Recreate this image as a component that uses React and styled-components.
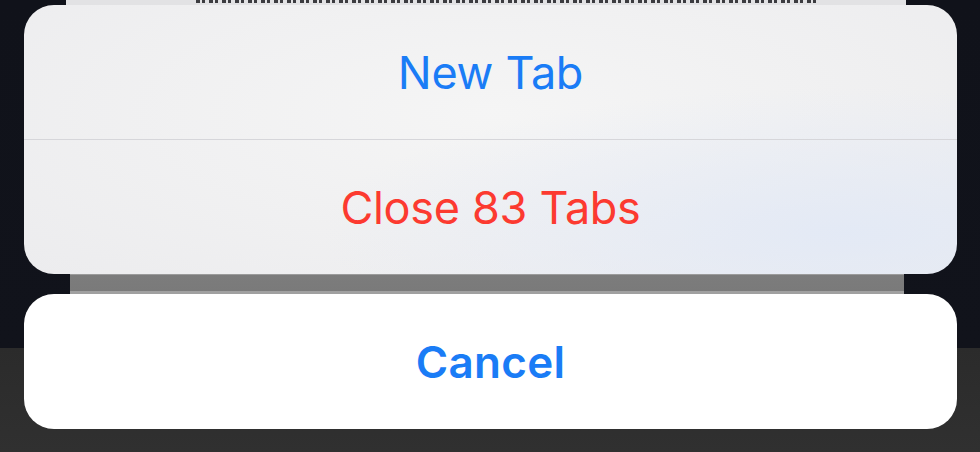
import React from 'react';
import styled, { createGlobalStyle } from 'styled-components';

const Global = createGlobalStyle`
    html, body {
        margin: 0;
        padding: 0;
        background: #10121a;
    }
`;

const Screen = styled.div`
    width: 980px;
    height: 452px;
    overflow: hidden;
    display: flex;
    flex-direction: column;
    padding: 0 23px 0 24px;
    box-sizing: border-box;
    background: linear-gradient(#10121a 0, #11131b 348px, #2b2b2b 348px, #303030 100%);
    font-family: Inter, "Liberation Sans", sans-serif;
`;

// bottom edge of the page behind the sheet: just the feet of some letters peek out
const PeekBar = styled.div`
    height: 5px;
    margin: 0 51px 0 42px;
    background:
        repeating-linear-gradient(90deg, #3c3c40 0 4px, transparent 4px 6px, #3c3c40 6px 9px, transparent 9px 13px) 130px 0 / 620px 3px no-repeat,
        #e2e2e4;
`;

const Group = styled.div`
    height: 269px;
    border-radius: 30px;
    overflow: hidden;
    display: flex;
    flex-direction: column;
    background:
        radial-gradient(ellipse at 88% 85%, rgba(226, 233, 246, 0.9), rgba(226, 233, 246, 0) 45%),
        radial-gradient(ellipse at 50% 40%, #f5f5f5, #ececee 100%);
`;

const Action = styled.div`
    flex: 1;
    display: flex;
    align-items: center;
    justify-content: center;
    font-size: ${p => (p.$bold ? '44px' : '45px')};
    font-weight: ${p => (p.$bold ? 600 : 400)};
    letter-spacing: ${p => (p.$bold ? '0.3px' : '-0.3px')};
    color: ${p => (p.$danger ? '#fc3a30' : '#1a7cf6')};
`;

const Divider = styled.div`
    height: 1px;
    background: #d6d6da;
`;

const Backdrop = styled.div`
    height: 20px;
    margin: 0 53px 0 46px;
    background: linear-gradient(#9b9b9b 0, #9b9b9b 1px, #7c7c7c 1px, #7a7a7a 17px, #a0a0a0 17px);
`;

const CancelCard = styled.div`
    height: 135px;
    border-radius: 30px;
    background: #ffffff;
    display: flex;
`;

export default function App() {
    return (
        <>
            <Global />
            <Screen>
                <PeekBar />
                <Group>
                    <Action>New Tab</Action>
                    <Divider />
                    <Action $danger>Close 83 Tabs</Action>
                </Group>
                <Backdrop />
                <CancelCard>
                    <Action $bold>Cancel</Action>
                </CancelCard>
            </Screen>
        </>
    );
}
